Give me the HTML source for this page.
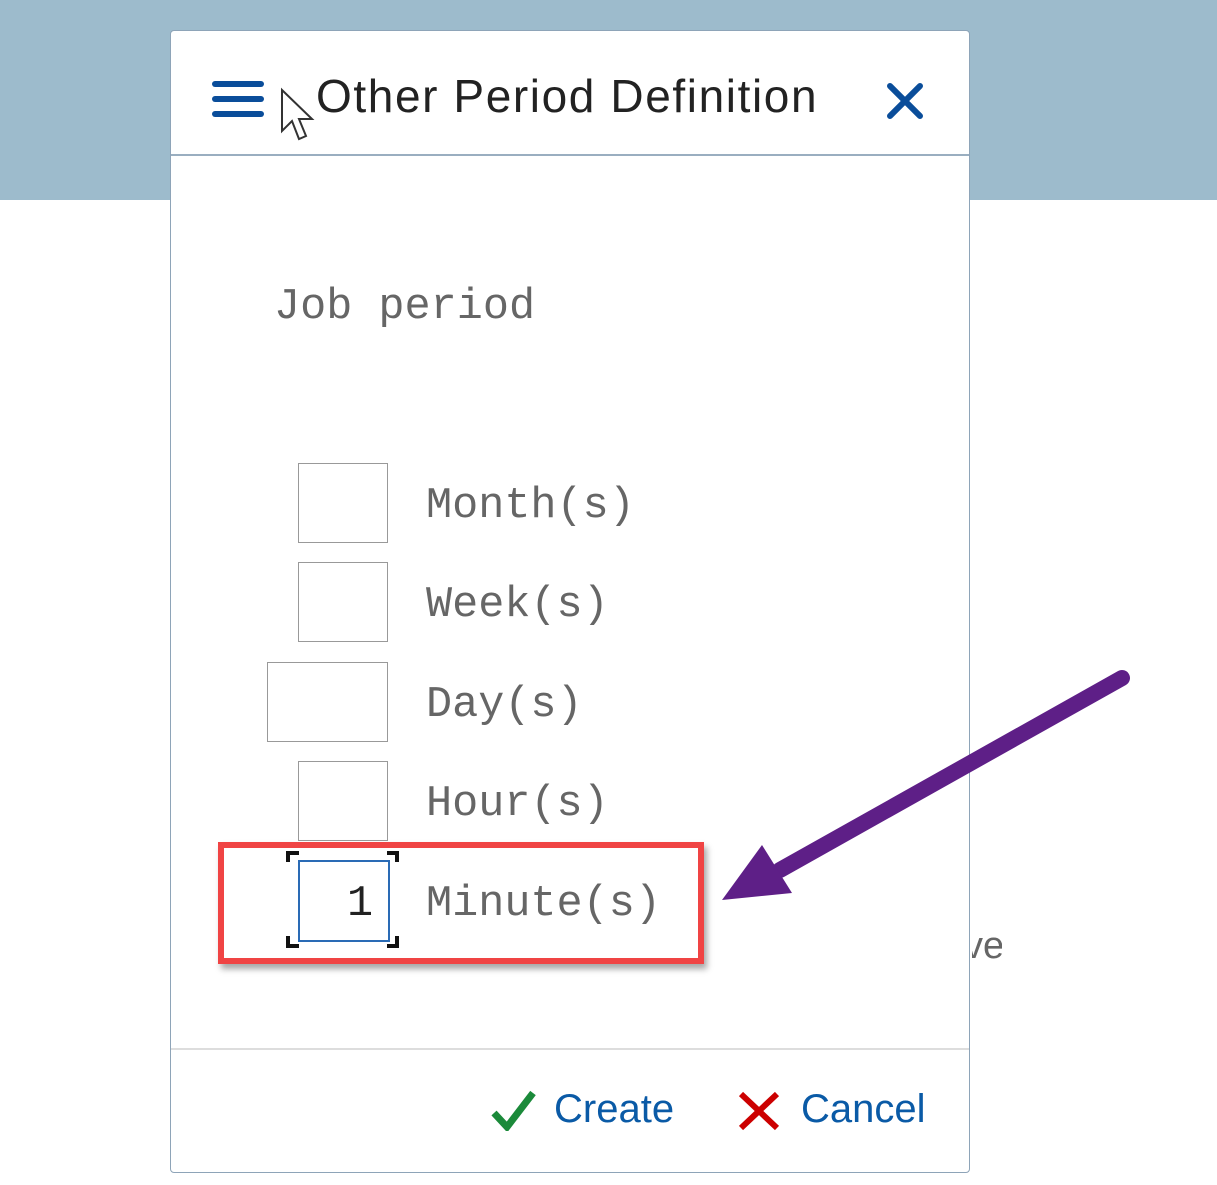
<!DOCTYPE html>
<html><head><style>
body{margin:0;width:1217px;height:1185px;background:#fff;position:relative;overflow:hidden;font-family:"Liberation Sans",sans-serif}
.band{position:absolute;left:0;top:0;width:1217px;height:200px;background:#9dbbcc}
.dlg{position:absolute;left:170px;top:30px;width:798px;height:1141px;background:#fff;border:1.5px solid #8ea4b8;border-radius:4px}
.hdr{position:absolute;left:0;top:0;width:798px;height:123px;border-bottom:2px solid #9aaec0}
.title{position:absolute;left:145px;top:38px;font-size:46px;color:#222;letter-spacing:1.6px}
.mono{position:absolute;font-family:"Liberation Mono",monospace;font-size:43.5px;color:#666}
.box{position:absolute;border:1.5px solid #999;background:#fff}
.foot{position:absolute;left:0;top:1017px;width:798px;border-top:2px solid #ddd}
.btn{position:absolute;font-size:40px;color:#0a5aa6}
</style></head><body>
<div class="band"></div>
<div class="dlg">
 <div class="hdr">
  <div style="position:absolute;left:41px;top:50px;width:52px;height:6px;background:#0a4d9a;border-radius:3px"></div>
  <div style="position:absolute;left:41px;top:65px;width:52px;height:6px;background:#0a4d9a;border-radius:3px"></div>
  <div style="position:absolute;left:41px;top:80px;width:52px;height:6px;background:#0a4d9a;border-radius:3px"></div>
  <svg style="position:absolute;left:108px;top:56px" width="40" height="60" viewBox="0 0 40 60"><path d="M3 3 L3 44 L13 34 L20 52 L27 49 L20 32 L33 32 Z" fill="#fff" stroke="#333" stroke-width="2"/></svg>
  <div class="title">Other Period Definition</div>
  <svg style="position:absolute;left:716px;top:52px" width="36" height="36"><path d="M3 3L33 33M33 3L3 33" stroke="#0a4d9a" stroke-width="6" stroke-linecap="round"/></svg>
 </div>
 <div class="mono" style="left:103px;top:252px">Job period</div>
 <div class="box" style="left:127px;top:432px;width:88px;height:78px"></div>
 <div class="mono" style="left:255px;top:451px">Month(s)</div>
 <div class="box" style="left:127px;top:531px;width:88px;height:78px"></div>
 <div class="mono" style="left:255px;top:550px">Week(s)</div>
 <div class="box" style="left:96px;top:631px;width:119px;height:78px"></div>
 <div class="mono" style="left:255px;top:650px">Day(s)</div>
 <div class="box" style="left:127px;top:730px;width:88px;height:78px"></div>
 <div class="mono" style="left:255px;top:749px">Hour(s)</div>
 <div class="box" style="left:127px;top:829px;width:88px;height:78px;border:2px solid #2a6bb5"></div>
 <div class="mono" style="left:176px;top:849px;color:#222">1</div>
 <div class="mono" style="left:255px;top:849px">Minute(s)</div>
 <div class="foot"></div>
 <svg style="position:absolute;left:320px;top:1058px" width="46" height="42"><path d="M3 24L16 38L42 4" stroke="#1b8a3a" stroke-width="7" fill="none"/></svg>
 <div class="btn" style="left:383px;top:1056px">Create</div>
 <svg style="position:absolute;left:567px;top:1060px" width="42" height="40"><path d="M3 3L39 37M39 3L3 37" stroke="#c00" stroke-width="6"/></svg>
 <div class="btn" style="left:630px;top:1056px">Cancel</div>
</div>
<div style="position:absolute;left:972px;top:925px;width:30px;overflow:hidden"><div style="margin-left:-8px;font-size:38px;color:#666">ve</div></div>
<svg style="position:absolute;left:285px;top:850px" width="116" height="100"><path d="M3 12V3H14M102 3H112V12M3 86V96H14M102 96H112V86" stroke="#111" stroke-width="4" fill="none"/></svg>
<div style="position:absolute;left:218px;top:842px;width:474px;height:110px;border:6px solid #f04444;box-shadow:3px 5px 6px rgba(0,0,0,.35)"></div>
<svg style="position:absolute;left:0;top:0" width="1217" height="1185"><path d="M1122 678 L780 870" stroke="#5e1f87" stroke-width="16" stroke-linecap="round"/><path d="M722 900 L762 845 L792 893 Z" fill="#5e1f87"/></svg>
</body></html>
